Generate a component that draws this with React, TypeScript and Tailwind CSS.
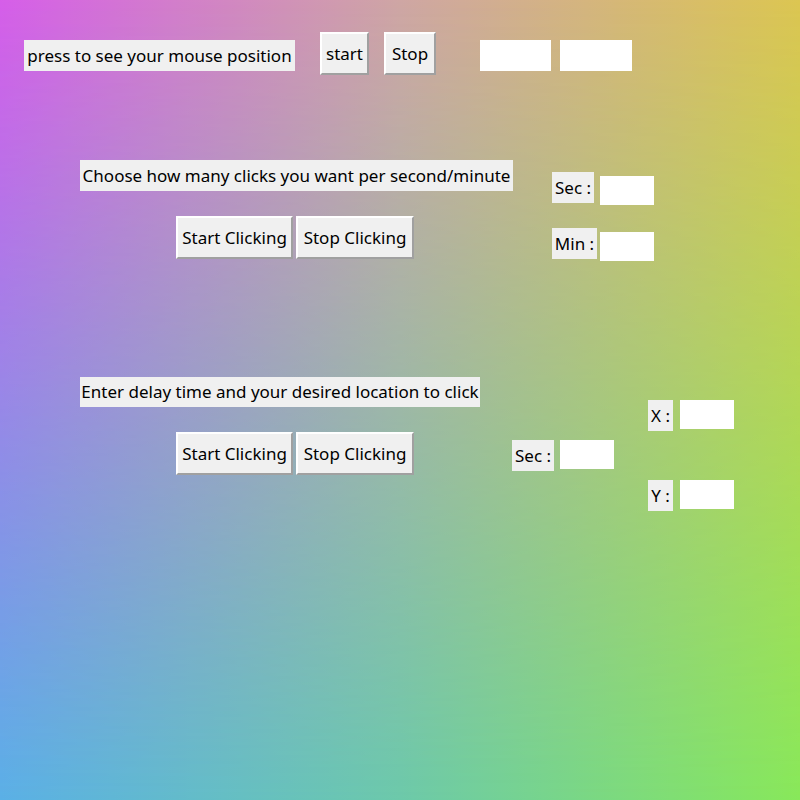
const Label = ({ text, className }: { text: string; className: string }) => (
  <div className={`flex items-center justify-center bg-[#f0f0f0] text-black whitespace-nowrap ${className}`}>
    {text}
  </div>
);

const Btn = ({ text, className }: { text: string; className: string }) => (
  <button
    className={`flex items-center justify-center bg-[#f0f0f0] text-black whitespace-nowrap border-2 border-t-white border-l-white border-r-[#a0a0a0] border-b-[#a0a0a0] ${className}`}
  >
    {text}
  </button>
);

const Entry = ({ className }: { className: string }) => (
  <input className={`bg-white border-0 outline-none ${className}`} />
);

export default function App() {
  return (
    <div className="relative w-full h-[800px] overflow-hidden bg-[linear-gradient(to_right,#d65ee9,#cfa6a4_50%,#dcc652)] font-['Noto_Sans',sans-serif] text-[17px] before:absolute before:inset-0 before:bg-[linear-gradient(to_right,#5ab0e6,#6cc9aa_50%,#88e85a)] before:[mask-image:linear-gradient(to_bottom,transparent,black)]">
      <div className="relative z-10">
        {/* mouse position */}
        <div className="flex items-start pl-[24px] pt-[32px]">
          <Label text="press to see your mouse position" className="mt-[8px] w-[271px] h-[31px]" />
          <Btn text="start" className="ml-[25px] w-[49px] h-[43px]" />
          <Btn text="Stop" className="ml-[15px] w-[52px] h-[43px]" />
          <Entry className="ml-[44px] mt-[8px] w-[71px] h-[31px]" />
          <Entry className="ml-[9px] mt-[8px] w-[72px] h-[31px]" />
        </div>

        {/* clicks per second/minute */}
        <div className="flex items-start mt-[85px]">
          <div className="flex flex-col pl-[80px]">
            <Label text="Choose how many clicks you want per second/minute" className="w-[433px] h-[31px]" />
            <div className="flex gap-[3px] mt-[25px] pl-[96px]">
              <Btn text="Start Clicking" className="w-[117px] h-[43px]" />
              <Btn text="Stop Clicking" className="w-[118px] h-[43px]" />
            </div>
          </div>
          <div className="flex flex-col gap-[23px] ml-[39px] pt-[12px]">
            <div className="flex items-start">
              <Label text="Sec :" className="w-[42px] h-[31px]" />
              <Entry className="ml-[6px] mt-[4px] w-[54px] h-[29px]" />
            </div>
            <div className="flex items-start">
              <Label text="Min :" className="w-[45px] h-[31px]" />
              <Entry className="ml-[3px] mt-[4px] w-[54px] h-[29px]" />
            </div>
          </div>
        </div>

        {/* delay + location */}
        <div className="flex items-start mt-[116px]">
          <div className="flex flex-col pl-[80px]">
            <Label text="Enter delay time and your desired location to click" className="w-[400px] h-[30px]" />
            <div className="flex gap-[3px] mt-[25px] pl-[96px]">
              <Btn text="Start Clicking" className="w-[117px] h-[43px]" />
              <Btn text="Stop Clicking" className="w-[118px] h-[43px]" />
            </div>
          </div>
          <div className="flex items-start ml-[32px] pt-[63px]">
            <Label text="Sec :" className="w-[42px] h-[31px]" />
            <Entry className="ml-[6px] w-[54px] h-[29px]" />
          </div>
          <div className="flex flex-col ml-[34px] pt-[23px]">
            <div className="flex items-start">
              <Label text="X :" className="w-[25px] h-[31px]" />
              <Entry className="ml-[7px] w-[54px] h-[29px]" />
            </div>
            <div className="flex items-start mt-[49px]">
              <Label text="Y :" className="w-[25px] h-[31px]" />
              <Entry className="ml-[7px] w-[54px] h-[29px]" />
            </div>
          </div>
        </div>
      </div>
    </div>
  );
}
